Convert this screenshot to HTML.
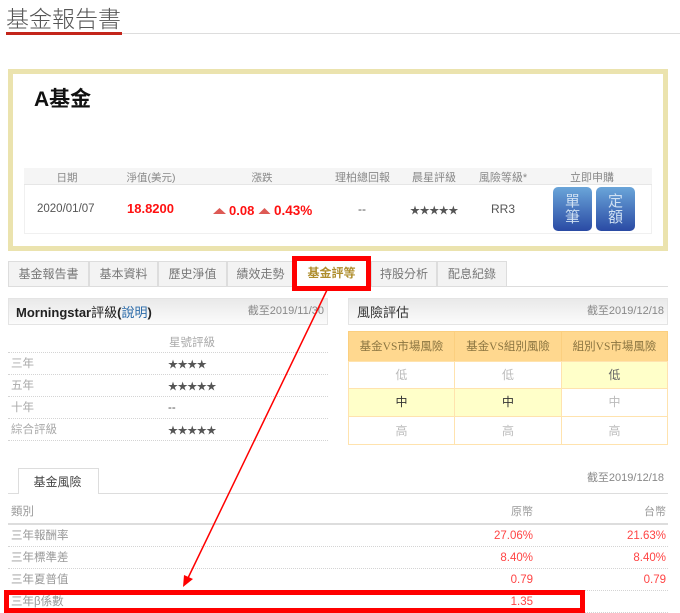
<!DOCTYPE html>
<html><head><meta charset="utf-8">
<style>
html,body{margin:0;padding:0;background:#fff}
body{width:680px;height:613px;position:relative;overflow:hidden;font-family:"Liberation Sans","Noto Sans CJK TC",sans-serif;font-size:11.5px;color:#666}
#w{position:absolute;left:0;top:0;width:680px;height:613px;filter:blur(.35px)}
.a{position:absolute;white-space:nowrap}
.c{text-align:center}
.r{text-align:right}
.line{position:absolute;height:0;border-top:1px dotted #d4d4d4}
.tab{position:absolute;top:261px;height:24px;line-height:25px;text-align:center;background:#f3f3f3;border:1px solid #ddd;border-bottom:none;color:#777;box-sizing:content-box;font-size:12px}
.hd{position:absolute;height:25px;background:linear-gradient(#e9e9e9,#fbfbfb);border:1px solid #e4e4e4;box-sizing:content-box}
.cell{position:absolute;text-align:center;box-sizing:border-box;border:1px solid #ffe3ae;color:#bbb;font-size:12px}
.y{background:#ffffc9;color:#666}
.h{background:#ffd88f;color:#8a7440;border-color:#fbcf7f;font-size:11.5px}
.h span{font-family:"Liberation Serif",serif}
.st{color:#555;letter-spacing:-.4px;font-size:10px}
.red{color:#f44;font-size:11.5px}
.g{color:#aaa}
.k{color:#999}
.th{line-height:16px;font-size:11px;color:#888}
</style></head>
<body>
<div id="w">
<div class="a" style="left:6px;top:4px;font-size:23px;line-height:30px;color:#555;font-weight:300">基金報告書</div>
<div class="a" style="left:6px;top:33px;width:674px;height:1px;background:#ddd"></div>
<div class="a" style="left:6px;top:32px;width:116px;height:3px;background:#c3251b"></div>

<div class="a" style="left:8px;top:69px;width:660px;height:182px;box-sizing:border-box;border:5px solid #ebe3ae;background:#fff"></div>
<div class="a" style="left:34px;top:86px;font-size:21px;line-height:28px;font-weight:bold;color:#111">A基金</div>

<div class="a" style="left:24px;top:168px;width:628px;height:66px;box-sizing:border-box;border:1px solid #f0f0f0"></div>
<div class="a" style="left:24px;top:168px;width:628px;height:17px;background:#f5f5f5;border-bottom:1px solid #e6e6e6;box-sizing:border-box"></div>
<div class="a c th" style="left:37px;top:170px;width:60px;font-size:10.5px">日期</div>
<div class="a c th" style="left:111px;top:170px;width:80px;font-size:10.5px">淨值(美元)</div>
<div class="a c th" style="left:232px;top:170px;width:60px;font-size:10.5px">漲跌</div>
<div class="a c th" style="left:325px;top:170px;width:75px">理柏總回報</div>
<div class="a c th" style="left:402px;top:170px;width:64px">晨星評級</div>
<div class="a c th" style="left:468px;top:170px;width:70px">風險等級*</div>
<div class="a c th" style="left:560px;top:170px;width:64px">立即申購</div>

<div class="a" style="left:37px;top:201px;line-height:16px;font-size:11.5px;color:#555">2020/01/07</div>
<div class="a" style="left:127px;top:201px;line-height:16px;font-size:13px;font-weight:bold;color:#f11">18.8200</div>
<svg class="a" style="left:213px;top:207px" width="14" height="8"><path d="M0 7 L6.5 1 L13 7Z" fill="#dd5a55"/></svg>
<div class="a" style="left:229px;top:203px;line-height:16px;font-size:13px;font-weight:bold;color:#f11">0.08</div>
<svg class="a" style="left:258px;top:207px" width="14" height="8"><path d="M0.5 7 L6.5 1 L12.5 7Z" fill="#dd5a55"/></svg>
<div class="a" style="left:274px;top:203px;line-height:16px;font-size:13.5px;font-weight:bold;color:#f11">0.43%</div>
<div class="a" style="left:358px;top:201px;line-height:16px;font-size:12px;color:#555">--</div>
<div class="a st" style="left:410px;top:204px;line-height:16px">★★★★★</div>
<div class="a" style="left:491px;top:201px;line-height:16px;font-size:12px;color:#555">RR3</div>

<div class="a c" style="left:553px;top:187px;width:39px;height:44px;border-radius:5px;background:linear-gradient(#6aa5d9,#2a4aa4);color:#cfe0f2;font-size:15px;line-height:16px;padding-top:7px;box-sizing:border-box">單<br>筆</div>
<div class="a c" style="left:596px;top:187px;width:39px;height:44px;border-radius:5px;background:linear-gradient(#6aa5d9,#2a4aa4);color:#cfe0f2;font-size:15px;line-height:16px;padding-top:7px;box-sizing:border-box">定<br>額</div>

<div class="a" style="left:8px;top:286px;width:660px;height:1px;background:#ddd"></div>
<div class="tab" style="left:8px;width:79px">基金報告書</div>
<div class="tab" style="left:89px;width:67px">基本資料</div>
<div class="tab" style="left:158px;width:67px">歷史淨值</div>
<div class="tab" style="left:227px;width:65px">績效走勢</div>
<div class="a c" style="left:298px;top:262px;width:67px;line-height:23px;font-weight:bold;color:#ae8d2c;font-size:12px">基金評等</div>
<div class="tab" style="left:371px;width:64px">持股分析</div>
<div class="tab" style="left:437px;width:68px">配息紀錄</div>
<div class="a" style="left:292px;top:256px;width:79px;height:35px;box-sizing:border-box;border:5.5px solid #f00"></div>

<div class="hd" style="left:8px;top:298px;width:318px"></div>
<div class="a" style="left:16px;top:303px;line-height:20px;font-size:13px;font-weight:bold;color:#222">Morningstar<span style="font-weight:400">評級</span>(<span style="color:#2a6aa8;font-weight:400">說明</span>)</div>
<div class="a r" style="left:228px;top:303px;width:96px;line-height:16px;font-size:11px;color:#888">截至2019/11/30</div>
<div class="a g" style="left:169px;top:335px;line-height:16px">星號評級</div>
<div class="line" style="left:8px;top:352px;width:320px"></div>
<div class="a g" style="left:11px;top:356px;line-height:16px">三年</div>
<div class="a st" style="left:168px;top:358px;line-height:16px">★★★★</div>
<div class="line" style="left:8px;top:374px;width:320px"></div>
<div class="a g" style="left:11px;top:378px;line-height:16px">五年</div>
<div class="a st" style="left:168px;top:380px;line-height:16px">★★★★★</div>
<div class="line" style="left:8px;top:396px;width:320px"></div>
<div class="a g" style="left:11px;top:400px;line-height:16px">十年</div>
<div class="a" style="left:168px;top:400px;line-height:16px;color:#555">--</div>
<div class="line" style="left:8px;top:418px;width:320px"></div>
<div class="a g" style="left:11px;top:422px;line-height:16px">綜合評級</div>
<div class="a st" style="left:168px;top:424px;line-height:16px">★★★★★</div>
<div class="line" style="left:8px;top:440px;width:320px"></div>

<div class="hd" style="left:348px;top:298px;width:318px"></div>
<div class="a" style="left:357px;top:303px;line-height:20px;font-size:13px;color:#333">風險評估</div>
<div class="a r" style="left:568px;top:303px;width:96px;line-height:16px;font-size:11px;color:#888">截至2019/12/18</div>

<div class="cell h" style="left:348px;top:331px;width:107px;height:31px;line-height:31px">基金<span>VS</span>市場風險</div>
<div class="cell h" style="left:454px;top:331px;width:108px;height:31px;line-height:31px">基金<span>VS</span>組別風險</div>
<div class="cell h" style="left:561px;top:331px;width:107px;height:31px;line-height:31px">組別<span>VS</span>市場風險</div>
<div class="cell" style="left:348px;top:361px;width:107px;height:28px;line-height:27px">低</div>
<div class="cell" style="left:454px;top:361px;width:108px;height:28px;line-height:27px">低</div>
<div class="cell y" style="left:561px;top:361px;width:107px;height:28px;line-height:27px">低</div>
<div class="cell y" style="left:348px;top:388px;width:107px;height:29px;line-height:27px;color:#333">中</div>
<div class="cell y" style="left:454px;top:388px;width:108px;height:29px;line-height:27px;color:#333">中</div>
<div class="cell" style="left:561px;top:388px;width:107px;height:29px;line-height:27px">中</div>
<div class="cell" style="left:348px;top:416px;width:107px;height:29px;line-height:28px">高</div>
<div class="cell" style="left:454px;top:416px;width:108px;height:29px;line-height:28px">高</div>
<div class="cell" style="left:561px;top:416px;width:107px;height:29px;line-height:28px">高</div>

<div class="a" style="left:8px;top:493px;width:660px;height:1px;background:#ddd"></div>
<div class="a c" style="left:18px;top:468px;width:81px;height:26px;box-sizing:border-box;border:1px solid #ddd;border-bottom:none;background:#fff;line-height:26px;color:#444;font-size:12px;padding-right:2px">基金風險</div>
<div class="a r" style="left:568px;top:470px;width:96px;line-height:16px;font-size:11px;color:#888">截至2019/12/18</div>

<div class="a k" style="left:11px;top:504px;line-height:16px">類別</div>
<div class="a r k" style="left:473px;top:504px;width:60px;line-height:16px;font-size:11px">原幣</div>
<div class="a r k" style="left:606px;top:504px;width:60px;line-height:16px;font-size:11px">台幣</div>
<div class="a" style="left:8px;top:523px;width:660px;height:2px;background:#ddd"></div>

<div class="a k" style="left:11px;top:528px;line-height:16px">三年報酬率</div>
<div class="a r red" style="left:453px;top:528px;width:80px;line-height:16px">27.06%</div>
<div class="a r red" style="left:586px;top:528px;width:80px;line-height:16px">21.63%</div>
<div class="line" style="left:8px;top:546px;width:660px"></div>
<div class="a k" style="left:11px;top:550px;line-height:16px">三年標準差</div>
<div class="a r red" style="left:453px;top:550px;width:80px;line-height:16px">8.40%</div>
<div class="a r red" style="left:586px;top:550px;width:80px;line-height:16px">8.40%</div>
<div class="line" style="left:8px;top:568px;width:660px"></div>
<div class="a k" style="left:11px;top:572px;line-height:16px">三年夏普值</div>
<div class="a r red" style="left:453px;top:572px;width:80px;line-height:16px">0.79</div>
<div class="a r red" style="left:586px;top:572px;width:80px;line-height:16px">0.79</div>
<div class="line" style="left:8px;top:590px;width:660px"></div>
<div class="a k" style="left:11px;top:594px;line-height:16px">三年β係數</div>
<div class="a r red" style="left:453px;top:594px;width:80px;line-height:16px">1.35</div>
<div class="line" style="left:8px;top:612px;width:660px"></div>
<div class="a" style="left:4px;top:590px;width:581px;height:23px;box-sizing:border-box;border:5px solid #f00"></div>

<svg class="a" style="left:0;top:0" width="680" height="613">
<path d="M327 290 L188 578" stroke="#f00" stroke-width="1.5" fill="none"/>
<path d="M183 587 L184 575 L193 579Z" fill="#f00"/>
</svg>
</div>
</body></html>
